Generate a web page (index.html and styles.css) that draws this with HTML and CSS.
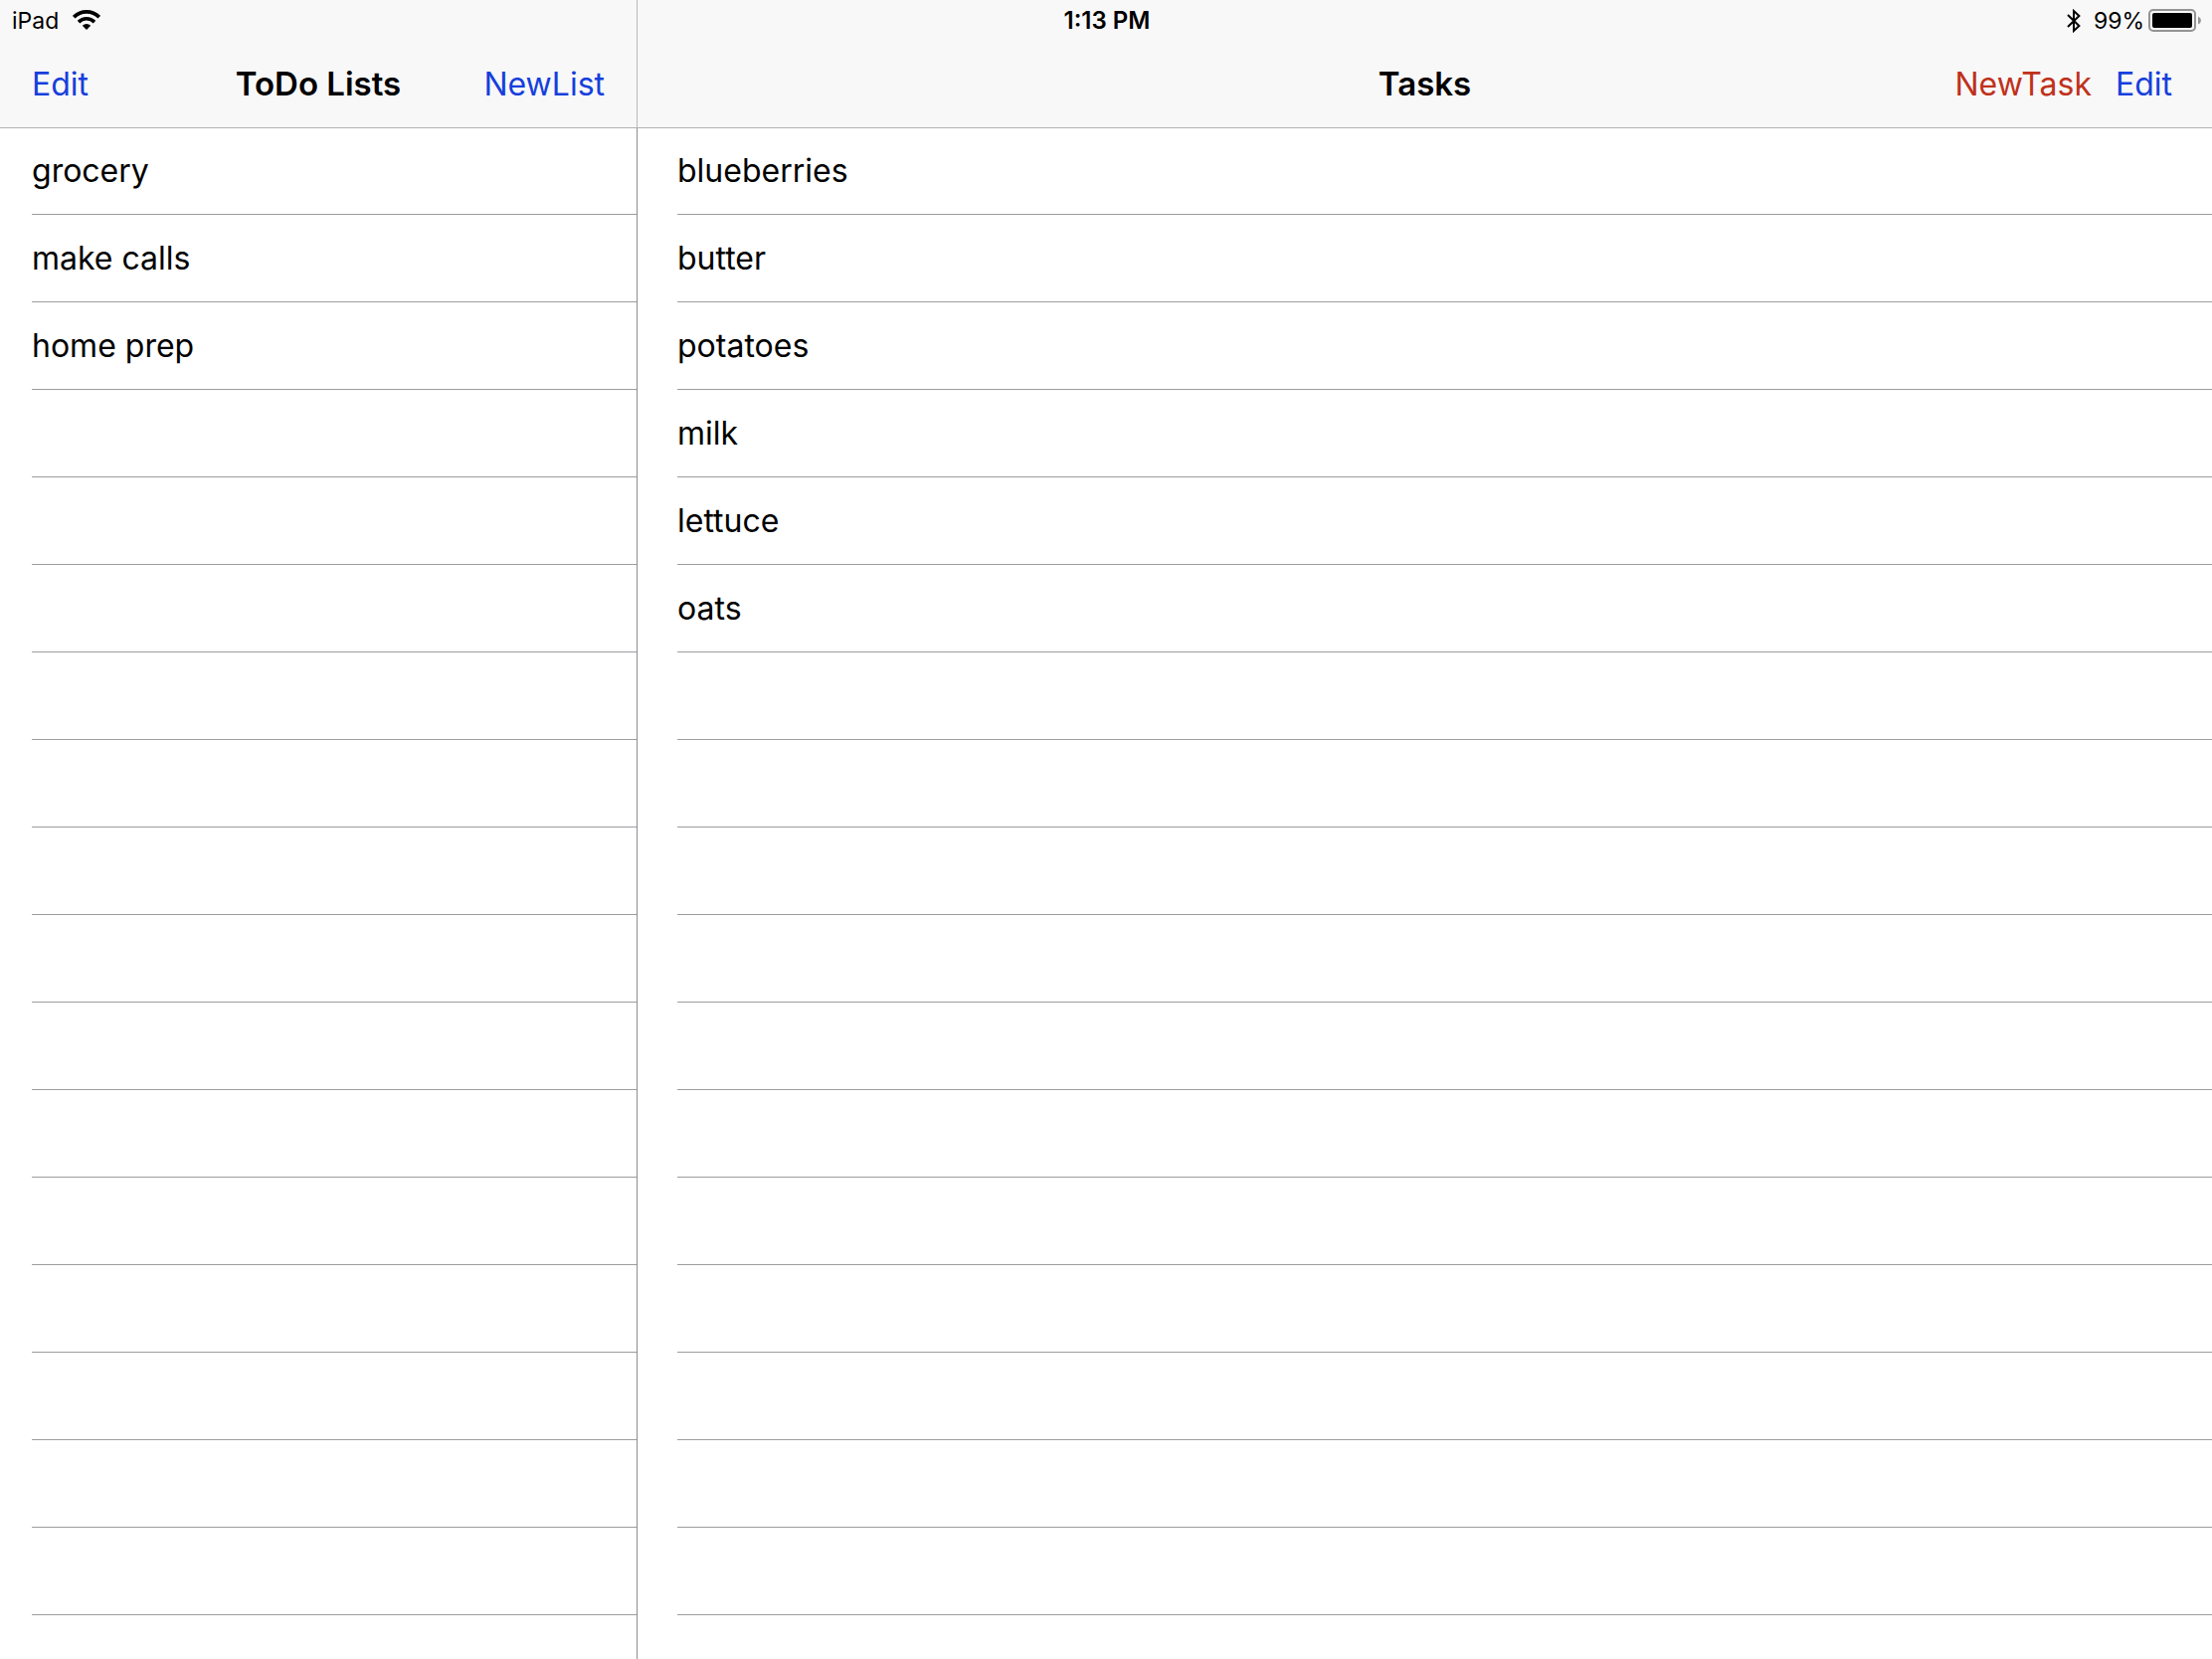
FILE: index.html
```html
<!DOCTYPE html>
<html lang="en">
<head>
<meta charset="utf-8">
<meta name="viewport" content="width=device-width, initial-scale=1">
<title>ToDo Lists</title>
<link rel="stylesheet" href="styles.css">
</head>
<body>
<div class="app">
  <div class="status">
    <div class="status-left">
      <span>iPad</span>
      <svg class="wifi" width="28" height="22" viewBox="0 0 28 22" aria-hidden="true">
        <path d="M1.2 7.2A18.2 18.2 0 0 1 26.8 7.2" fill="none" stroke="#000" stroke-width="3.8"/>
        <path d="M6 12.1A11.4 11.4 0 0 1 22 12.1" fill="none" stroke="#000" stroke-width="3.6"/>
        <path d="M14 20L9.8 15.8A6 6 0 0 1 18.2 15.8Z"/>
      </svg>
    </div>
    <time class="clock">1:13 PM</time>
    <div class="status-right">
      <svg class="bluetooth" width="14" height="24" viewBox="0 0 14 24" aria-hidden="true">
        <path d="M1 6L12.4 17L7 22V2L12.4 7L1 18" fill="none" stroke="#000" stroke-width="2"/>
      </svg>
      <span>99%</span>
      <svg class="battery" width="54" height="24" viewBox="0 0 54 24" aria-hidden="true">
        <rect x="1" y="1" width="46" height="21" rx="4" fill="none" stroke="#949494" stroke-width="2"/>
        <rect x="4" y="4" width="40" height="15" rx="2"/>
        <path d="M50 7.5Q53 9 53 11.5T50 15.5Z" fill="#949494"/>
      </svg>
    </div>
  </div>

  <section class="pane lists">
    <header class="bar">
      <div class="actions"><button type="button">Edit</button></div>
      <h1>ToDo Lists</h1>
      <div class="actions end"><button type="button">NewList</button></div>
    </header>
    <ul class="rows">
      <li>grocery</li>
      <li>make calls</li>
      <li>home prep</li>
      <li></li><li></li><li></li><li></li><li></li><li></li><li></li>
      <li></li><li></li><li></li><li></li><li></li><li></li><li></li>
    </ul>
  </section>

  <main class="pane tasks">
    <header class="bar">
      <div class="actions"></div>
      <h1>Tasks</h1>
      <div class="actions end">
        <button type="button" class="new-task">NewTask</button>
        <button type="button">Edit</button>
      </div>
    </header>
    <ul class="rows">
      <li>blueberries</li>
      <li>butter</li>
      <li>potatoes</li>
      <li>milk</li>
      <li>lettuce</li>
      <li>oats</li>
      <li></li><li></li><li></li><li></li><li></li><li></li>
      <li></li><li></li><li></li><li></li><li></li>
    </ul>
  </main>
</div>
</body>
</html>
```
FILE: styles.css
```css
* {
  box-sizing: border-box;
}

body {
  margin: 0;
  background: #fff;
  color: #000;
  font-family: Inter, "Liberation Sans", sans-serif;
  font-size: 32px;
  line-height: 40px;
}

.app {
  display: grid;
  grid-template-columns: 641px 1fr;
  grid-template-rows: 40px 1fr;
  min-height: 100vh;
}

/* The status bar shares the first grid row with both panes. */
.status {
  grid-area: 1 / 1 / 2 / 3;
  z-index: 2;
  display: grid;
  grid-template-columns: 1fr auto 1fr;
  align-items: center;
  padding: 2px 10px 0 12px;
  font-size: 23px;
  line-height: 38px;
}

.status-left,
.status-right {
  display: flex;
  align-items: center;
}

.status-left {
  gap: 14px;
}

.status-right {
  justify-content: flex-end;
}

.bluetooth {
  margin-right: 13px;
}

.battery {
  margin-left: 4px;
}

.clock {
  font-size: 24px;
  font-weight: 600;
}

.pane {
  grid-row: 1 / 3;
  display: flex;
  flex-direction: column;
}

.lists {
  --inset: 32px;
  grid-column: 1;
}

.tasks {
  --inset: 40px;
  grid-column: 2;
}

.bar {
  z-index: 1;
  display: grid;
  grid-template-columns: 1fr auto 1fr;
  align-items: center;
  height: 128px;
  padding: 40px var(--inset) 0;
  background: #f8f8f8;
  box-shadow: 0 1px 0 #b2b2b2;
}

.lists .bar {
  border-right: 1px solid #b9b9b9;
}

h1 {
  margin: 0;
  font-size: 33px;
  font-weight: 600;
}

.actions {
  display: flex;
  gap: 24px;
}

.end {
  justify-content: flex-end;
}

button {
  padding: 2px 0 0;
  border: 0;
  background: none;
  color: #163fdc;
  font: inherit;
  cursor: pointer;
}

.new-task {
  color: #bf311a;
}

.rows {
  flex: 1;
  margin: 0;
  padding: 0 0 0 var(--inset);
  list-style: none;
}

.lists .rows {
  border-right: 1px solid #8e8e93;
}

.rows li {
  display: flex;
  align-items: center;
  height: 88px;
  border-bottom: 1px solid #9d9da0;
}
```
